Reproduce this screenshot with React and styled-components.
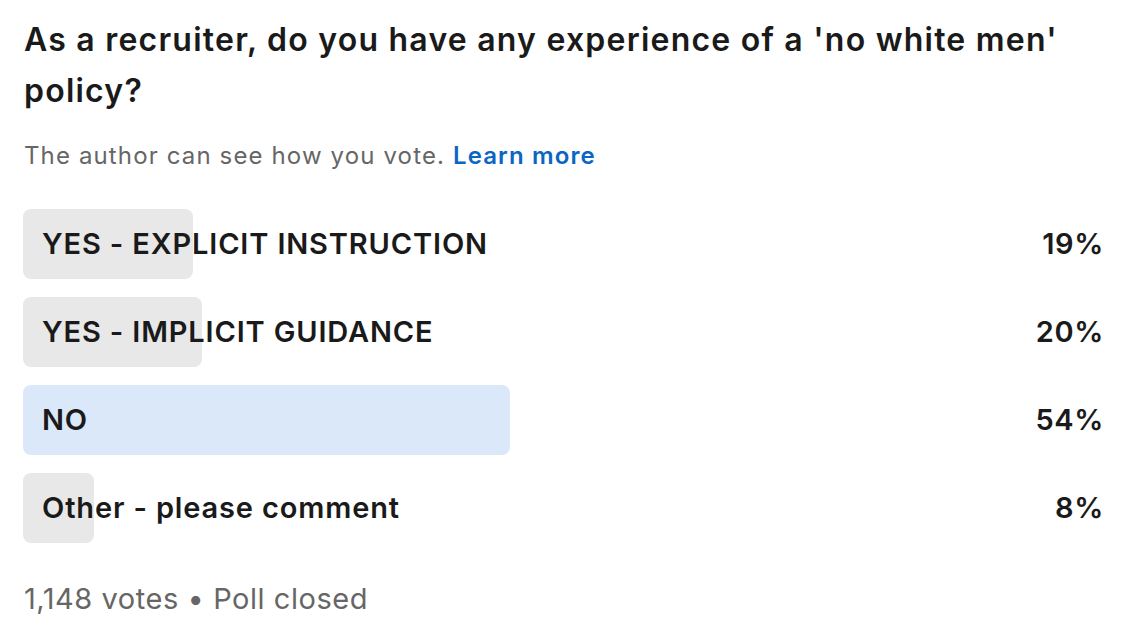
import React from "react";
import styled, { createGlobalStyle } from "styled-components";

const Global = createGlobalStyle`
  html, body { margin: 0; padding: 0; background: #fff; }
  body { font-family: Inter, "Noto Sans", sans-serif; color: rgba(0,0,0,0.9); }
`;

const Card = styled.div`
  width: 1130px;
  height: 640px;
  box-sizing: border-box;
  padding: 13.5px 26px 0 23px;
  display: flex;
  flex-direction: column;
`;

const Title = styled.h1`
  margin: 0;
  padding-left: 1px;
  font-size: 32px;
  line-height: 51px;
  font-weight: 600;
  color: #1a1a1a;
  letter-spacing: 1.22px;
`;

const Note = styled.p`
  margin: 24px 0 0;
  padding-left: 1px;
  font-size: 24px;
  line-height: 32px;
  color: #666666;
  letter-spacing: 1.13px;
`;

const Link = styled.a`
  color: #0a66c2;
  font-weight: 600;
  text-decoration: none;
`;

const Options = styled.div`
  margin-top: 37px;
  display: flex;
  flex-direction: column;
  gap: 18px;
`;

const Row = styled.div`
  display: flex;
  align-items: center;
  height: 70px;
`;

const Track = styled.div`
  position: relative;
  flex: 1;
  height: 100%;
  display: flex;
  align-items: center;
`;

const Fill = styled.div`
  position: absolute;
  left: 0;
  top: 0;
  bottom: 0;
  border-radius: 8px;
  background: ${(p) => (p.$leading ? "#dae8fa" : "#e8e8e8")};
`;

const Label = styled.span`
  position: relative;
  padding-left: 19px;
  font-size: 29px;
  font-weight: 600;
  color: #1a1a1a;
  letter-spacing: 0.85px;
`;

const Percent = styled.span`
  width: 180px;
  text-align: right;
  font-size: 29px;
  font-weight: 600;
  color: #1a1a1a;
  letter-spacing: 0.6px;
`;

const Footer = styled.div`
  margin-top: 38px;
  padding-left: 1px;
  font-size: 29px;
  line-height: 36px;
  color: #666666;
  letter-spacing: 0.55px;
`;

const options = [
  { label: "YES - EXPLICIT INSTRUCTION", pct: 19, width: 170 },
  { label: "YES - IMPLICIT GUIDANCE", pct: 20, width: 179 },
  { label: "NO", pct: 54, width: 487, leading: true },
  { label: "Other - please comment", pct: 8, width: 71 },
];

export default function App() {
  return (
    <>
      <Global />
      <Card>
        <Title>
          As a recruiter, do you have any experience of a 'no white men' policy?
        </Title>
        <Note>
          The author can see how you vote. <Link href="#">Learn more</Link>
        </Note>
        <Options>
          {options.map((o) => (
            <Row key={o.label}>
              <Track>
                <Fill $leading={o.leading} style={{ width: o.width }} />
                <Label>{o.label}</Label>
              </Track>
              <Percent>{o.pct}%</Percent>
            </Row>
          ))}
        </Options>
        <Footer>1,148 votes • Poll closed</Footer>
      </Card>
    </>
  );
}
